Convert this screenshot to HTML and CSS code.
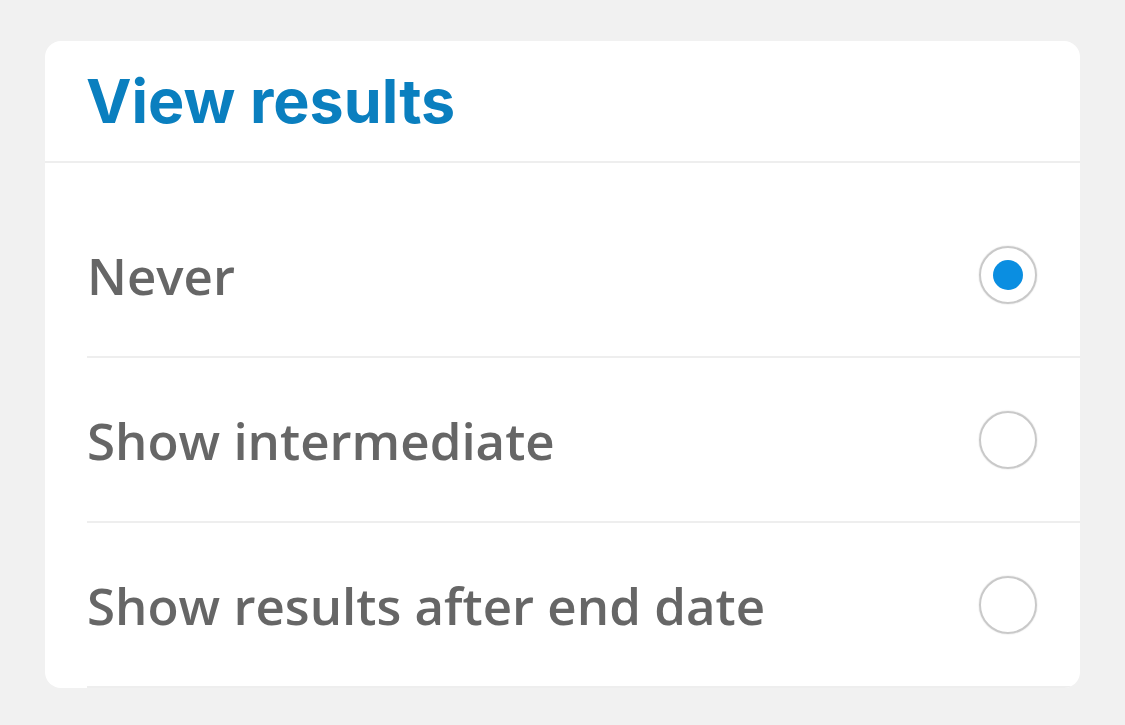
FILE: index.html
```
<!DOCTYPE html>
<html lang="en">

<head>
  <meta charset="UTF-8">
  <meta name="viewport" content="width=device-width, initial-scale=1.0">
  <title>View results</title>
  <link rel="stylesheet" href="styles.css">
</head>

<body>
  <div class="card">
    <div class="card-header">
      <h2 class="heading">View results</h2>
    </div>
    <ul class="options">
      <li class="option">
        <span class="label">Never</span>
        <span class="radio checked"></span>
      </li>
      <li class="option">
        <span class="label">Show intermediate</span>
        <span class="radio"></span>
      </li>
      <li class="option">
        <span class="label">Show results after end date</span>
        <span class="radio"></span>
      </li>
    </ul>
  </div>
</body>

</html>
```

FILE: styles.css
```
body {
  margin: 0;
  padding: 41px 45px;
  background: #f1f1f1;
  font-family: 'Open Sans', 'Noto Sans', sans-serif;
}

.card {
  background: #fff;
  border-radius: 16px;
  overflow: hidden;
}

.card-header {
  height: 120px;
  display: flex;
  align-items: center;
  padding-left: 41px;
  border-bottom: 2px solid #eeeeee;
}

.heading {
  margin: 0;
  font-family: 'Inter', 'Lato', sans-serif;
  font-weight: 700;
  font-size: 61px;
  letter-spacing: 0;
  color: #0a7fbf;
}

.options {
  list-style: none;
  margin: 0;
  padding: 30px 0 0 42px;
}

.option {
  height: 163px;
  display: flex;
  align-items: center;
  justify-content: space-between;
  padding-right: 43px;
  border-bottom: 2px solid #eeeeee;
}

.label {
  font-size: 51px;
  font-weight: 600;
  color: #666;
}

.radio {
  width: 54px;
  height: 54px;
  border: 2px solid #c9c9c9;
  border-radius: 50%;
  box-shadow: 0 0 1.5px rgba(0, 0, 0, 0.2);
  display: flex;
  align-items: center;
  justify-content: center;
}

.radio.checked::after {
  content: "";
  width: 30px;
  height: 30px;
  border-radius: 50%;
  background: #0a8ee1;
}
```
